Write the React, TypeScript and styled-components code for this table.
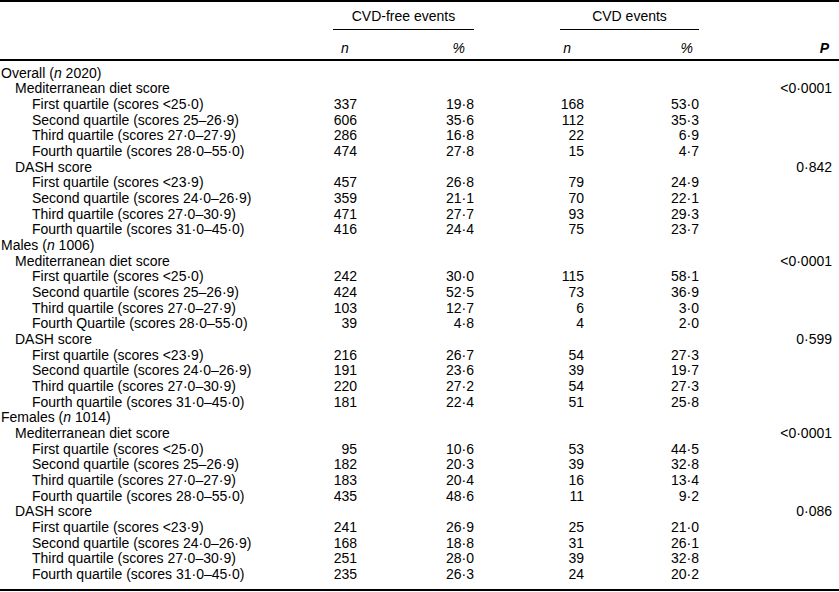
import React from "react";
import styled, { createGlobalStyle } from "styled-components";

const GlobalStyle = createGlobalStyle`
  html, body {
    margin: 0;
    padding: 0;
    background: #ffffff;
  }
  body {
    font-family: "Liberation Sans", Arial, sans-serif;
    font-size: 14px;
    color: #000000;
  }
`;

const COLUMNS = "333px 24px 117px 86px 24px 115px 133px";

type Quartile = [string, string, string, string, string];

interface Score {
  title: string;
  p: string;
  rows: Quartile[];
}

interface Group {
  title: string;
  n: string;
  scores: Score[];
}

const GROUPS: Group[] = [
  {
    title: "Overall",
    n: "2020",
    scores: [
      {
        title: "Mediterranean diet score",
        p: "<0·0001",
        rows: [
          ["First quartile (scores <25·0)", "337", "19·8", "168", "53·0"],
          ["Second quartile (scores 25–26·9)", "606", "35·6", "112", "35·3"],
          ["Third quartile (scores 27·0–27·9)", "286", "16·8", "22", "6·9"],
          ["Fourth quartile (scores 28·0–55·0)", "474", "27·8", "15", "4·7"],
        ],
      },
      {
        title: "DASH score",
        p: "0·842",
        rows: [
          ["First quartile (scores <23·9)", "457", "26·8", "79", "24·9"],
          ["Second quartile (scores 24·0–26·9)", "359", "21·1", "70", "22·1"],
          ["Third quartile (scores 27·0–30·9)", "471", "27·7", "93", "29·3"],
          ["Fourth quartile (scores 31·0–45·0)", "416", "24·4", "75", "23·7"],
        ],
      },
    ],
  },
  {
    title: "Males",
    n: "1006",
    scores: [
      {
        title: "Mediterranean diet score",
        p: "<0·0001",
        rows: [
          ["First quartile (scores <25·0)", "242", "30·0", "115", "58·1"],
          ["Second quartile (scores 25–26·9)", "424", "52·5", "73", "36·9"],
          ["Third quartile (scores 27·0–27·9)", "103", "12·7", "6", "3·0"],
          ["Fourth Quartile (scores 28·0–55·0)", "39", "4·8", "4", "2·0"],
        ],
      },
      {
        title: "DASH score",
        p: "0·599",
        rows: [
          ["First quartile (scores <23·9)", "216", "26·7", "54", "27·3"],
          ["Second quartile (scores 24·0–26·9)", "191", "23·6", "39", "19·7"],
          ["Third quartile (scores 27·0–30·9)", "220", "27·2", "54", "27·3"],
          ["Fourth quartile (scores 31·0–45·0)", "181", "22·4", "51", "25·8"],
        ],
      },
    ],
  },
  {
    title: "Females",
    n: "1014",
    scores: [
      {
        title: "Mediterranean diet score",
        p: "<0·0001",
        rows: [
          ["First quartile (scores <25·0)", "95", "10·6", "53", "44·5"],
          ["Second quartile (scores 25–26·9)", "182", "20·3", "39", "32·8"],
          ["Third quartile (scores 27·0–27·9)", "183", "20·4", "16", "13·4"],
          ["Fourth quartile (scores 28·0–55·0)", "435", "48·6", "11", "9·2"],
        ],
      },
      {
        title: "DASH score",
        p: "0·086",
        rows: [
          ["First quartile (scores <23·9)", "241", "26·9", "25", "21·0"],
          ["Second quartile (scores 24·0–26·9)", "168", "18·8", "31", "26·1"],
          ["Third quartile (scores 27·0–30·9)", "251", "28·0", "39", "32·8"],
          ["Fourth quartile (scores 31·0–45·0)", "235", "26·3", "24", "20·2"],
        ],
      },
    ],
  },
];

const Table = styled.div`
  width: 839px;
  border-top: 2px solid #000;
  border-bottom: 2px solid #000;
  line-height: 15.66px;
`;

const Row = styled.div`
  display: grid;
  grid-template-columns: ${COLUMNS};
  white-space: nowrap;
`;

const SpanRow = styled(Row)`
  padding-top: 7px;
`;

const SpanHead = styled.div<{ $start: number; $end: number }>`
  grid-column: ${({ $start, $end }) => `${$start} / ${$end}`};
  text-align: center;
  padding-bottom: 4px;
  border-bottom: 1px solid #000;
`;

const SubRow = styled(Row)`
  padding-top: 11px;
  padding-bottom: 3px;
  border-bottom: 2px solid #000;
`;

const SubHead = styled.div<{ $col: number; $pad?: number; $center?: boolean }>`
  grid-column: ${({ $col }) => $col};
  text-align: ${({ $center }) => ($center ? "center" : "right")};
  padding-right: ${({ $pad }) => $pad ?? 0}px;
  font-style: italic;
`;

const PHead = styled(SubHead)`
  font-weight: bold;
`;

const Body = styled.div`
  padding: 4.5px 0 6.7px;
`;

const Label = styled.div<{ $level: number }>`
  padding-left: ${({ $level }) => [1, 15, 32][$level]}px;
`;

const Num = styled.div<{ $col: number }>`
  grid-column: ${({ $col }) => $col};
  text-align: right;
`;

const Italic = styled.i`
  font-style: italic;
`;

const QuartileRow: React.FC<{ row: Quartile }> = ({ row }) => (
  <Row>
    <Label $level={2}>{row[0]}</Label>
    <Num $col={2}>{row[1]}</Num>
    <Num $col={3}>{row[2]}</Num>
    <Num $col={5}>{row[3]}</Num>
    <Num $col={6}>{row[4]}</Num>
  </Row>
);

const App: React.FC = () => (
  <>
    <GlobalStyle />
    <Table>
      <SpanRow>
        <SpanHead $start={2} $end={4}>CVD-free events</SpanHead>
        <SpanHead $start={5} $end={7}>CVD events</SpanHead>
      </SpanRow>
      <SubRow>
        <SubHead $col={2} $center>n</SubHead>
        <SubHead $col={3} $pad={9}>%</SubHead>
        <SubHead $col={5} $pad={13}>n</SubHead>
        <SubHead $col={6} $pad={6}>%</SubHead>
        <PHead $col={7} $pad={3}>P</PHead>
      </SubRow>
      <Body>
        {GROUPS.map((g) => (
          <React.Fragment key={g.title}>
            <Row>
              <Label $level={0}>
                {g.title} (<Italic>n</Italic> {g.n})
              </Label>
            </Row>
            {g.scores.map((s) => (
              <React.Fragment key={s.title}>
                <Row>
                  <Label $level={1}>{s.title}</Label>
                  <Num $col={7}>{s.p}</Num>
                </Row>
                {s.rows.map((r) => (
                  <QuartileRow key={r[0]} row={r} />
                ))}
              </React.Fragment>
            ))}
          </React.Fragment>
        ))}
      </Body>
    </Table>
  </>
);

export default App;
